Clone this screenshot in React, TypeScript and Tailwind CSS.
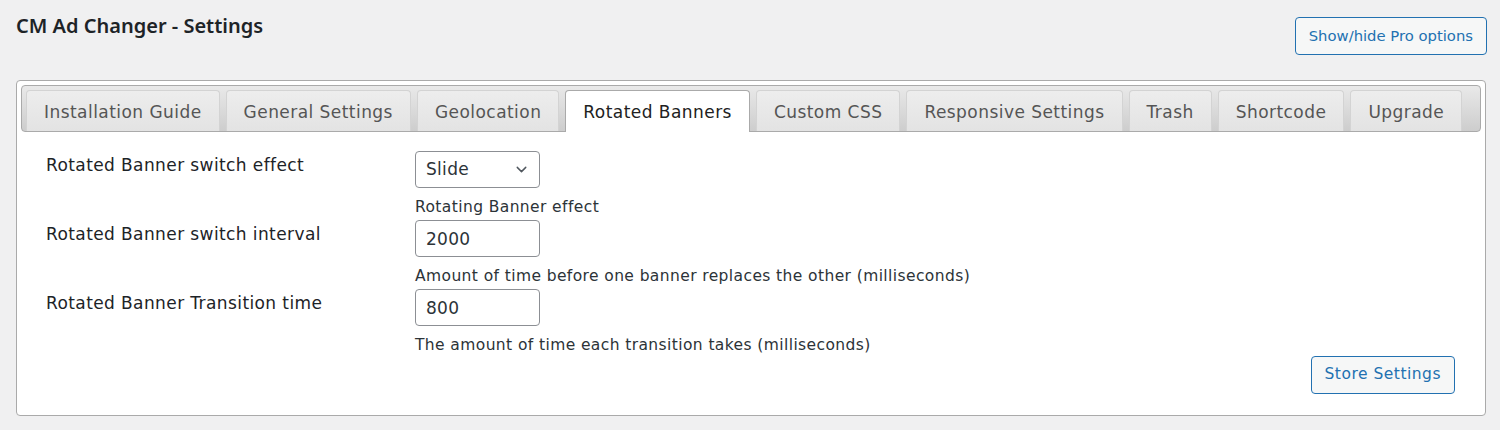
import React from 'react';
import { ChevronDown } from 'lucide-react';

const tabs = [
  'Installation Guide',
  'General Settings',
  'Geolocation',
  'Rotated Banners',
  'Custom CSS',
  'Responsive Settings',
  'Trash',
  'Shortcode',
  'Upgrade',
];

const rows = [
  { label: 'Rotated Banner switch effect', kind: 'select', value: 'Slide', help: 'Rotating Banner effect' },
  { label: 'Rotated Banner switch interval', kind: 'input', value: '2000', help: 'Amount of time before one banner replaces the other (milliseconds)' },
  { label: 'Rotated Banner Transition time', kind: 'input', value: '800', help: 'The amount of time each transition takes (milliseconds)' },
];

const App: React.FC = () => {
  return (
    <div className="min-h-[430px] w-full bg-[#f0f0f1] pl-4 pr-[13px] pt-[12px] text-[#1d2327] font-['DejaVu_Sans','Noto_Sans',sans-serif]">
      <div className="flex items-start justify-between">
        <h2 className="font-['Noto_Sans',sans-serif] text-[20px] font-semibold leading-[28px] text-[#1d2327]">CM Ad Changer - Settings</h2>
        <button className="mt-[5px] h-[38px] rounded-[4px] border border-[#2271b1] bg-[#f6f7f7] px-[13px] text-[14.8px] text-[#2271b1]">
          Show/hide Pro options
        </button>
      </div>

      <div className="mt-[25px] w-[1470px] rounded-[4px] border border-[#aaaaaa] bg-white p-[4px]">
        <ul className="flex gap-[6px] rounded-[4px] border border-[#aaaaaa] bg-gradient-to-b from-[#e9e9e9] to-[#cdcdcd] px-[4px] pt-[4px]">
          {tabs.map((t) => {
            const active = t === 'Rotated Banners';
            return (
              <li
                key={t}
                className={
                  active
                    ? 'relative -mb-px flex h-[42px] items-center rounded-t-[4px] border border-b-0 border-[#aaaaaa] bg-white px-[17px] pt-[4px] pb-px text-[17px] tracking-[0.45px] text-[#212121]'
                    : 'flex h-[41px] items-center rounded-t-[4px] border border-b-0 border-[#d3d3d3] bg-gradient-to-b from-[#ededed] to-[#e3e3e3] px-[17px] pt-[4px] text-[17px] tracking-[0.45px] text-[#555555]'
                }
              >
                {t}
              </li>
            );
          })}
        </ul>

        <div className="pl-[25px] pr-[26px] pt-[19px] pb-[17px]">
          <div className="flex flex-col gap-[1px]">
            {rows.map((r) => (
              <div key={r.label} className="flex">
                <div className="w-[369px] pt-[2px] text-[17px] leading-[24px] tracking-[0.4px] text-[#1d2327]">{r.label}</div>
                <div className="flex flex-col">
                  {r.kind === 'select' ? (
                    <div className="flex h-[37px] w-[125px] items-center justify-between rounded-[4px] border border-[#8c8f94] bg-white pl-[10px] pr-[9px] text-[17px] tracking-[0.3px] text-[#2c3338]">
                      <span>{r.value}</span>
                      <ChevronDown size={17} strokeWidth={2} className="text-[#50575e]" />
                    </div>
                  ) : (
                    <input
                      readOnly
                      value={r.value}
                      className="h-[37px] w-[125px] rounded-[4px] border border-[#8c8f94] bg-white px-[10px] text-[17px] tracking-[0.3px] text-[#2c3338] outline-none"
                    />
                  )}
                  <div className="mt-[7px] text-[15.5px] leading-[24px] tracking-[0.4px] text-[#2c3338]">{r.help}</div>
                </div>
              </div>
            ))}
          </div>
          <div className="-mt-px flex justify-end">
            <button className="h-[38px] rounded-[4px] border border-[#2271b1] bg-[#f6f7f7] px-[13px] text-[15.5px] tracking-[0.5px] text-[#2271b1]">
              Store Settings
            </button>
          </div>
        </div>
      </div>
    </div>
  );
};

export default App;
